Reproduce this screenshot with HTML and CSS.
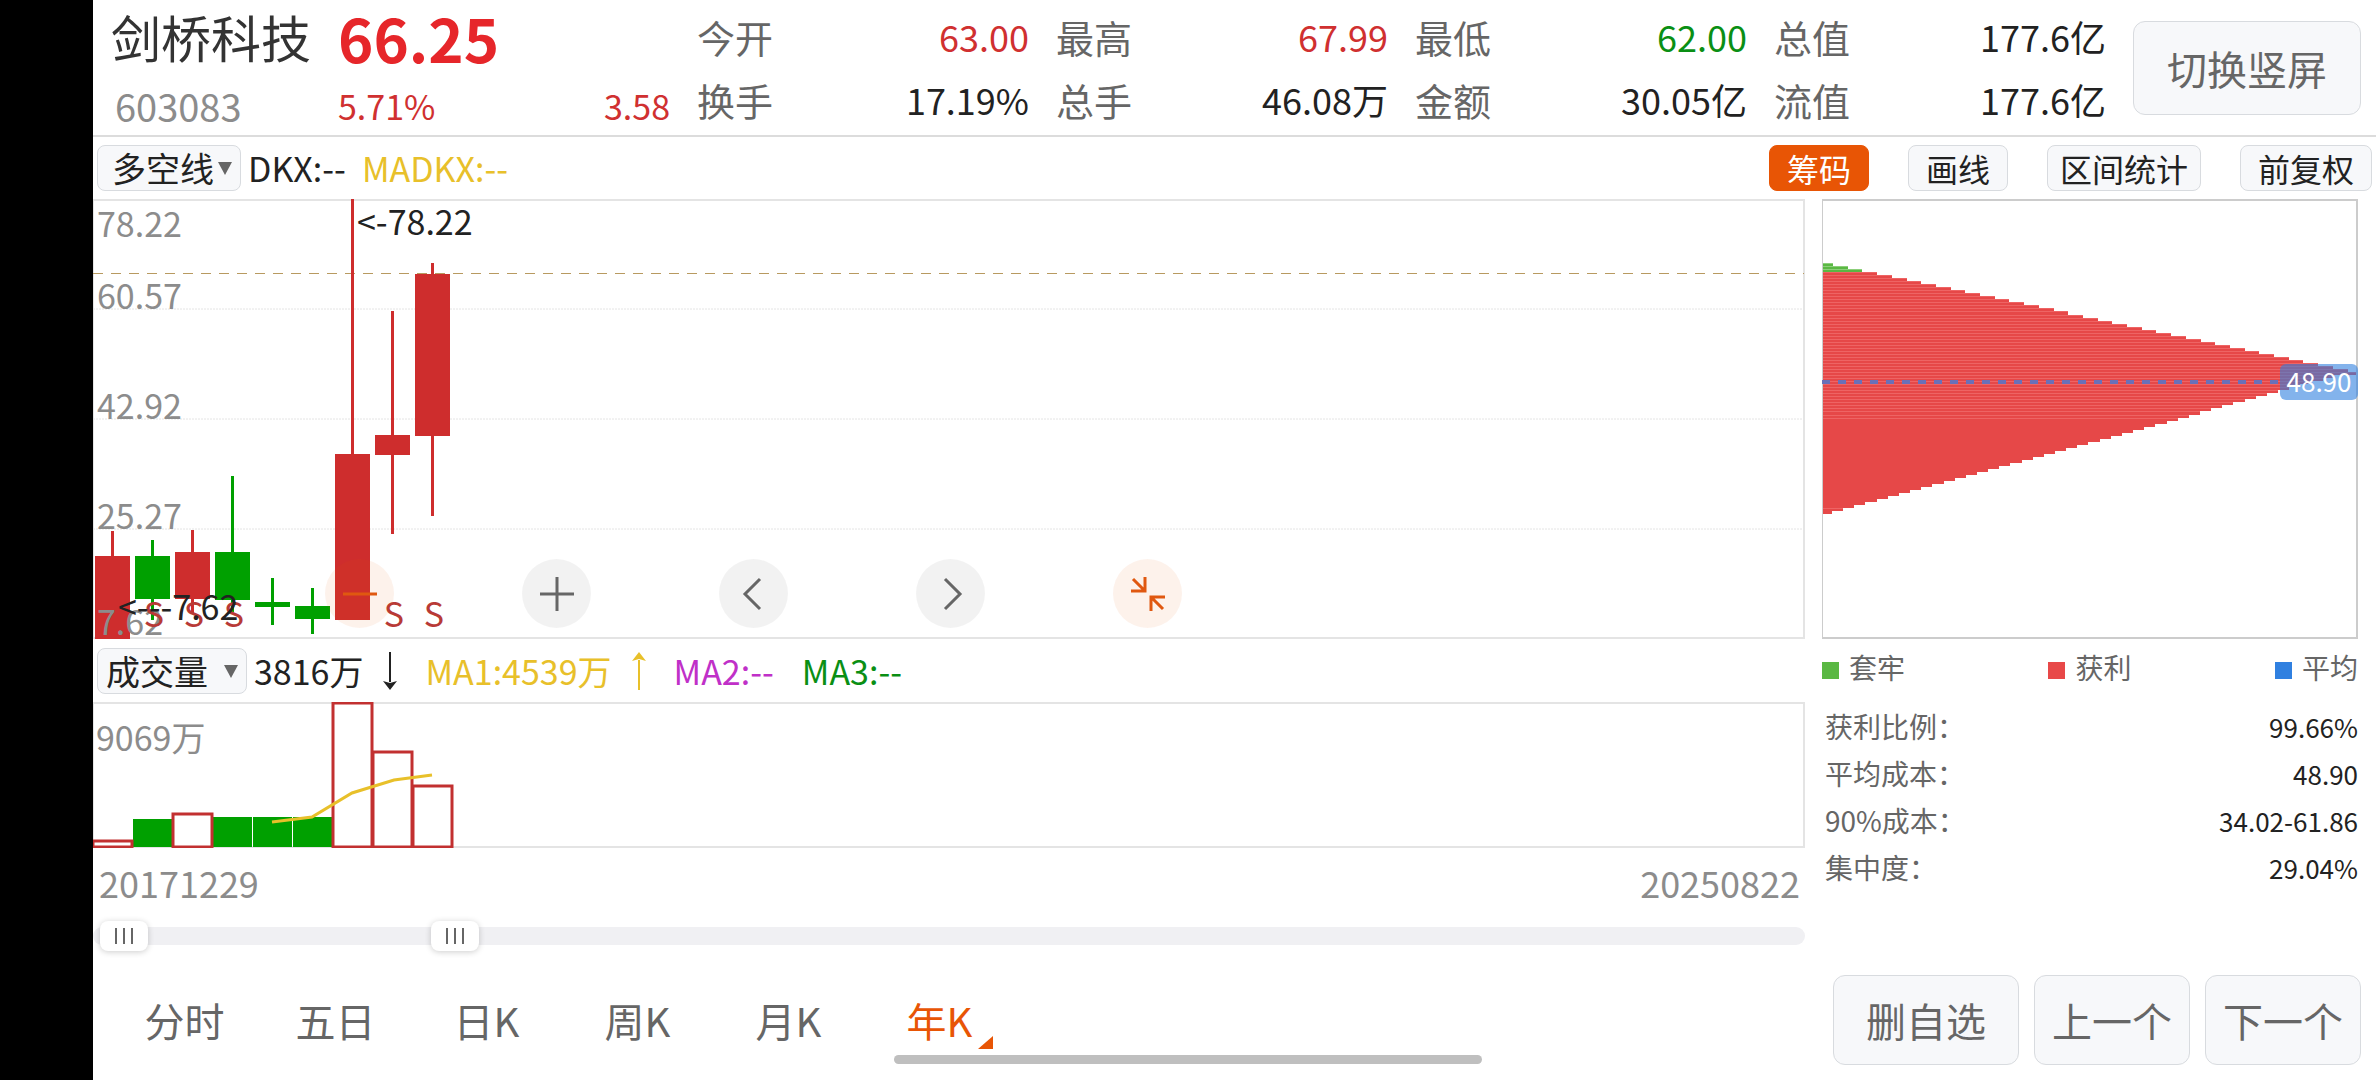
FILE: index.html
```html
<!DOCTYPE html>
<html lang="zh-CN">
<head>
  <meta charset="UTF-8" />
  <meta name="viewport" content="width=device-width, initial-scale=1.0"/>
  <title>剑桥科技 603083</title>
  <link rel="stylesheet" href="styles.css">
</head>

<body>
  <div class="app">
    <header class="quote">
      <h1 class="name">剑桥科技</h1>
      <div class="price">66.25</div>
      <div class="item"><span>今开</span><b class="up">63.00</b></div>
      <div class="item"><span>最高</span><b class="up">67.99</b></div>
      <div class="item"><span>最低</span><b class="down">62.00</b></div>
      <div class="item"><span>总值</span><b>177.6亿</b></div>
      <button class="btn rotate">切换竖屏</button>

      <div class="code">603083</div>
      <div class="change up"><span>5.71%</span><span>3.58</span></div>
      <div class="item"><span>换手</span><b>17.19%</b></div>
      <div class="item"><span>总手</span><b>46.08万</b></div>
      <div class="item"><span>金额</span><b>30.05亿</b></div>
      <div class="item"><span>流值</span><b>177.6亿</b></div>
    </header>

    <div class="toolbar">
      <div class="picker">
        <select id="mainIndicator" aria-label="主图指标">
          <option>多空线</option>
        </select>
        <svg class="caret" viewBox="0 0 14 13"><path d="M0 0H14L7 13Z"/></svg>
      </div>
      <span>DKX:--</span>
      <span class="gold madkx">MADKX:--</span>
      <div class="tools">
        <button class="btn tool active">筹码</button>
        <button class="btn tool">画线</button>
        <button class="btn tool wide">区间统计</button>
        <button class="btn tool">前复权</button>
      </div>
    </div>

    <main class="content">
      <section class="charts">
        <div class="kline">
          <svg class="chart" viewBox="0 0 1712 440">
            <rect class="frame" x="0" y="1" width="1711" height="438"/>
            <path class="grid" d="M0 110H1711M0 220H1711M0 330H1711"/>
            <path class="last-price" d="M0 74H1711"/>

            <g class="candle-up">
              <rect x="2" y="357" width="35" height="83"/>
              <rect x="18" y="332" width="3" height="25"/>
              <rect x="82" y="353" width="35" height="47"/>
              <rect x="98" y="331" width="3" height="83"/>
              <rect x="242" y="255" width="35" height="166"/>
              <rect x="258" y="0" width="3" height="255"/>
              <rect x="282" y="236" width="35" height="20"/>
              <rect x="298" y="112" width="3" height="223"/>
              <rect x="322" y="75" width="35" height="162"/>
              <rect x="338" y="64" width="3" height="253"/>
            </g>
            <g class="candle-down">
              <rect x="42" y="357" width="35" height="43"/>
              <rect x="58" y="341" width="3" height="80"/>
              <rect x="122" y="353" width="35" height="48"/>
              <rect x="138" y="277" width="3" height="136"/>
              <rect x="162" y="403" width="35" height="5"/>
              <rect x="178" y="379" width="3" height="47"/>
              <rect x="202" y="407" width="35" height="13"/>
              <rect x="218" y="389" width="3" height="46"/>
            </g>

            <g class="axis">
              <text x="4" y="38">78.22</text>
              <text x="4" y="110">60.57</text>
              <text x="4" y="220">42.92</text>
              <text x="4" y="330">25.27</text>
              <text x="4" y="436">7.62</text>
            </g>
            <g class="signal">
              <text x="61" y="428">S</text>
              <text x="101" y="428">S</text>
              <text x="141" y="428">S</text>
              <text x="301" y="428">S</text>
              <text x="341" y="428">S</text>
            </g>
            <text class="mark" x="264" y="36">&lt;-78.22</text>
            <text class="mark" x="25" y="421">&lt;---7.62</text>
          </svg>

          <div class="controls">
            <button class="round hot" aria-label="缩小">
              <svg viewBox="0 0 34 34"><path d="M0 17H34"/></svg>
            </button>
            <button class="round" aria-label="放大">
              <svg viewBox="0 0 34 34"><path d="M0 17H34M17 0V34"/></svg>
            </button>
            <button class="round" aria-label="左移">
              <svg viewBox="0 0 34 34"><path d="M23 2L8 17L23 32"/></svg>
            </button>
            <button class="round" aria-label="右移">
              <svg viewBox="0 0 34 34"><path d="M11 2L26 17L11 32"/></svg>
            </button>
            <button class="round hot" aria-label="退出全屏">
              <svg viewBox="0 0 34 34"><path d="M2 2L14 14M0 14H14V0M32 32L20 20M34 20H20V34"/></svg>
            </button>
          </div>
        </div>

        <div class="toolbar sub">
          <div class="picker">
            <select id="subIndicator" aria-label="副图指标">
              <option>成交量</option>
            </select>
            <svg class="caret" viewBox="0 0 14 13"><path d="M0 0H14L7 13Z"/></svg>
          </div>
          <span>3816万</span>
          <svg class="arrow" viewBox="0 0 14 38"><path d="M7 0V30" class="shaft"/><path d="M0 29L7 31L14 29L7 38Z"/></svg>
          <span class="gold ma">MA1:4539万</span>
          <svg class="arrow gold" viewBox="0 0 14 38"><path d="M7 8V38" class="shaft"/><path d="M0 9L7 7L14 9L7 0Z"/></svg>
          <span class="purple ma">MA2:--</span>
          <span class="down ma">MA3:--</span>
        </div>

        <svg class="chart" viewBox="0 0 1712 146">
          <rect class="frame" x="0" y="1" width="1711" height="144"/>
          <g class="vol-down">
            <rect x="40" y="117" width="39" height="28"/>
            <rect x="120" y="115" width="39" height="30"/>
            <rect x="160" y="115" width="39" height="30"/>
            <rect x="200" y="115" width="39" height="30"/>
          </g>
          <g class="vol-up">
            <rect x="0" y="139" width="39" height="6"/>
            <rect x="80" y="112" width="39" height="33"/>
            <rect x="240" y="1" width="39" height="144"/>
            <rect x="280" y="50" width="39" height="95"/>
            <rect x="320" y="84" width="39" height="61"/>
          </g>
          <polyline class="vol-ma" points="179,120 219,115 259,91 301,78 339,73"/>
          <text class="axis" x="3" y="49">9069万</text>
        </svg>

        <div class="dates"><span>20171229</span><span>20250822</span></div>

        <div class="range">
          <input type="range" min="0" max="1000" value="4" aria-label="起始日期">
          <input type="range" min="0" max="1000" value="203" aria-label="结束日期">
        </div>
      </section>

      <aside class="chips">
        <svg class="chart" viewBox="0 0 536 440">
          <g id="chipBars"></g>
          <rect class="chip-frame" x="0" y="1" width="535" height="438"/>
          <path class="chip-avg" d="M0 183H458"/>
          <rect class="chip-tag" x="458" y="165" width="78" height="36" rx="6"/>
          <text class="chip-label" x="497" y="193">48.90</text>
        </svg>

        <div class="legend">
          <span><i class="trapped"></i>套牢</span>
          <span><i class="profit"></i>获利</span>
          <span><i class="average"></i>平均</span>
        </div>

        <dl class="stats">
          <div><dt>获利比例：</dt><dd>99.66%</dd></div>
          <div><dt>平均成本：</dt><dd>48.90</dd></div>
          <div><dt>90%成本：</dt><dd>34.02-61.86</dd></div>
          <div><dt>集中度：</dt><dd>29.04%</dd></div>
        </dl>
      </aside>
    </main>

    <footer class="bottom">
      <nav class="tabs">
        <button class="tab">分时</button>
        <button class="tab">五日</button>
        <button class="tab">日K</button>
        <button class="tab">周K</button>
        <button class="tab">月K</button>
        <button class="tab current">年K</button>
      </nav>
      <div class="actions">
        <button class="btn big">删自选</button>
        <button class="btn">上一个</button>
        <button class="btn">下一个</button>
      </div>
    </footer>
  </div>
  <div class="home-bar"></div>

  <script src="script.js"></script>
</body>
</html>
```

FILE: styles.css
```css
* {
  box-sizing: border-box;
}

body {
  margin: 0;
  font-family: "Noto Sans CJK SC", sans-serif;
  font-size: 34px;
  background: #000;
  color: #222;
}

button,
select {
  font-family: inherit;
  color: inherit;
  cursor: pointer;
}

.app {
  margin-left: 93px;
  min-height: 100vh;
  background: #fff;
  display: flex;
  flex-direction: column;
}

.up {
  color: #d03030;
}

.down {
  color: #0a8f14;
}

.gold {
  color: #e8c02a;
}

.purple {
  color: #c030c8;
}

.btn {
  background: #f7f8fa;
  border: 1px solid #d8dbdf;
  border-radius: 12px;
  font-size: 40px;
  line-height: 1;
  color: #666;
  padding: 0;
}

/* quote header */
.quote {
  display: grid;
  grid-template-columns: 200px repeat(5, 1fr) 228px;
  grid-template-rows: 63px 63px;
  column-gap: 27px;
  align-items: center;
  padding: 5px 15px 4px 18px;
  border-bottom: 2px solid #dcdcdc;
  line-height: 63px;
}

.name {
  margin: 0;
  font-size: 50px;
  font-weight: 400;
  color: #333;
  white-space: nowrap;
}

.price {
  font-size: 60px;
  font-weight: 700;
  color: #e6262a;
}

.code {
  font-size: 38px;
  color: #8c8c8c;
  padding: 12px 0 0 4px;
}

.change {
  display: flex;
  justify-content: space-between;
  font-size: 34px;
  padding-top: 12px;
}

.item {
  display: flex;
  justify-content: space-between;
  font-size: 36px;
}

.item span {
  font-size: 38px;
  color: #666;
}

.item b {
  font-weight: 400;
}

.rotate {
  grid-column: 7;
  grid-row: 1 / 3;
  height: 94px;
}

/* indicator rows */
.toolbar {
  display: flex;
  align-items: center;
  height: 62px;
  padding: 0 4px;
  line-height: 46px;
}

.picker {
  position: relative;
  margin-right: 7px;
}

.picker select {
  display: block;
  appearance: none;
  height: 46px;
  padding: 0 26px 0 14px;
  font-size: 34px;
  line-height: 44px;
  background: #f7f8fa;
  border: 1px solid #d8dbdf;
  border-radius: 8px;
}

.caret {
  position: absolute;
  right: 9px;
  top: 17px;
  width: 14px;
  height: 13px;
  fill: #666;
  pointer-events: none;
}

.madkx {
  margin-left: 16px;
}

.tools {
  display: flex;
  gap: 39px;
  margin-left: auto;
}

.tool {
  height: 46px;
  padding: 0 17px;
  border-radius: 8px;
  font-size: 32px;
  color: #222;
}

.tool.wide {
  padding: 0 12px;
}

.tool.active {
  background: #e85505;
  border-color: #e85505;
  color: #fff;
}

.sub {
  height: 63px;
}

.sub .picker select {
  padding: 0 38px 0 8px;
}

.arrow {
  width: 14px;
  height: 38px;
  margin-left: 20px;
  fill: currentColor;
}

.arrow .shaft {
  stroke: currentColor;
  stroke-width: 2;
}

.ma {
  margin-left: 28px;
}

/* charts */
.content {
  display: grid;
  grid-template-columns: minmax(0, 1fr) 536px;
  column-gap: 17px;
  padding-right: 18px;
}

.chart {
  display: block;
  width: 100%;
  height: auto;
  font-size: 34px;
}

.kline {
  position: relative;
}

.frame {
  fill: none;
  stroke: #e4e4e4;
  stroke-width: 2;
}

.grid {
  stroke: #e4e4e4;
  stroke-width: 1;
  stroke-dasharray: 2 1;
}

.last-price {
  stroke: #b89a60;
  stroke-dasharray: 10 8;
  shape-rendering: crispEdges;
}

.candle-up {
  fill: #ce2d2d;
}

.candle-down {
  fill: #00a000;
}

.axis {
  fill: #8c8c8c;
}

.signal {
  fill: #b83a36;
  text-anchor: middle;
}

.mark {
  fill: #222;
}

.controls {
  position: absolute;
  left: 232px;
  bottom: 11px;
  display: flex;
  gap: 128px;
}

.round {
  display: flex;
  align-items: center;
  justify-content: center;
  width: 69px;
  height: 69px;
  padding: 0;
  border: none;
  border-radius: 50%;
  background: rgba(0, 0, 0, 0.05);
  color: #666;
}

.round.hot {
  background: rgba(232, 85, 5, 0.08);
  color: #e05810;
}

.round svg {
  width: 34px;
  height: 34px;
  fill: none;
  stroke: currentColor;
  stroke-width: 3;
}

.vol-down {
  fill: #00a000;
}

.vol-up {
  fill: #fff;
  stroke: #c23030;
  stroke-width: 3;
}

.vol-ma {
  fill: none;
  stroke: #e8c02a;
  stroke-width: 3;
}

.dates {
  display: flex;
  justify-content: space-between;
  padding: 10px 5px 0 6px;
  font-size: 36px;
  line-height: 48px;
  color: #8c8c8c;
}

/* date range slider */
.range {
  position: relative;
  height: 18px;
  margin-top: 21px;
  border-radius: 9px;
  background: #f0f0f3;
}

.range input {
  position: absolute;
  left: 0;
  top: -6px;
  width: 100%;
  height: 30px;
  margin: 0;
  appearance: none;
  background: none;
  pointer-events: none;
}

.range input::-webkit-slider-thumb {
  appearance: none;
  width: 48px;
  height: 30px;
  border-radius: 8px;
  background:
    linear-gradient(#666, #666) 15px 7px / 2px 16px no-repeat,
    linear-gradient(#666, #666) 23px 7px / 2px 16px no-repeat,
    linear-gradient(#666, #666) 31px 7px / 2px 16px no-repeat,
    #fff;
  box-shadow: 0 1px 6px rgba(0, 0, 0, 0.2);
  pointer-events: auto;
}

/* chip distribution */
#chipBars {
  shape-rendering: crispEdges;
}

.chip-frame {
  fill: none;
  stroke: #ccc;
  stroke-width: 2;
}

.bar-red {
  fill: #e64848;
}

.bar-green {
  fill: #5ab843;
}

.bar-line {
  fill: #ee6464;
}

.bar-line-green {
  fill: #8ccf7a;
}

.chip-avg {
  stroke: #6a70b8;
  stroke-width: 4;
  stroke-dasharray: 8 8;
}

.chip-tag {
  fill: rgba(48, 128, 224, 0.6);
}

.chip-label {
  fill: #fff;
  font-size: 26px;
  text-anchor: middle;
}

.legend {
  display: flex;
  justify-content: space-between;
  font-size: 28px;
  line-height: 56px;
  color: #666;
}

.legend i {
  display: inline-block;
  width: 17px;
  height: 17px;
  margin-right: 10px;
}

.trapped {
  background: #5ab843;
}

.profit {
  background: #e84848;
}

.average {
  background: #3080e0;
}

.stats {
  margin: 8px 0 0;
  padding-left: 3px;
  line-height: 47px;
}

.stats div {
  display: flex;
  justify-content: space-between;
}

.stats dt {
  font-size: 28px;
  color: #666;
}

.stats dd {
  margin: 0;
  font-size: 26px;
}

/* bottom bar */
.bottom {
  display: flex;
  justify-content: space-between;
  margin-top: auto;
  padding: 0 15px 15px 16px;
}

.tabs {
  display: flex;
}

.tab {
  position: relative;
  width: 151px;
  padding: 0;
  border: none;
  background: none;
  font-size: 40px;
  line-height: 90px;
  color: #666;
}

.tab.current {
  color: #e85505;
}

.tab.current::after {
  content: "";
  position: absolute;
  right: 22px;
  bottom: 16px;
  border-left: 15px solid transparent;
  border-bottom: 13px solid #e85505;
}

.actions {
  display: flex;
  gap: 15px;
}

.actions .btn {
  width: 156px;
  height: 90px;
}

.actions .big {
  width: 186px;
}

.home-bar {
  position: fixed;
  left: 50%;
  bottom: 16px;
  width: 588px;
  height: 9px;
  margin-left: -294px;
  border-radius: 5px;
  background: #bfbfbf;
}
```

FILE: script.js
```js
const NS = 'http://www.w3.org/2000/svg';
const chipBars = document.getElementById('chipBars');

// chip distribution: triangle from top price to bottom price, widest at the peak
const ROWS = 83;
const PEAK = 36;
const GREEN_ROWS = 3;
const TOP = 64;
const STEP = 3.03;

function addBar(y, width, height, cls) {
  const rect = document.createElementNS(NS, 'rect');
  rect.setAttribute('x', 0);
  rect.setAttribute('y', y);
  rect.setAttribute('width', width);
  rect.setAttribute('height', height);
  rect.setAttribute('class', cls);
  chipBars.appendChild(rect);
}

for (let i = 0; i < ROWS; i++) {
  const width = i <= PEAK
    ? Math.min(535, 11 + i * 14.7)
    : 10 + (ROWS - 1 - i) * 11.15;
  const y = Math.round(TOP + i * STEP);
  const next = Math.round(TOP + (i + 1) * STEP);
  const green = i < GREEN_ROWS;
  addBar(y, width, next - y, green ? 'bar-green' : 'bar-red');
  // separator lines stop where the rows merge into a solid block
  if (i < 52 || i === ROWS - 2) {
    addBar(y, width, 1, green ? 'bar-line-green' : 'bar-line');
  }
}
```
